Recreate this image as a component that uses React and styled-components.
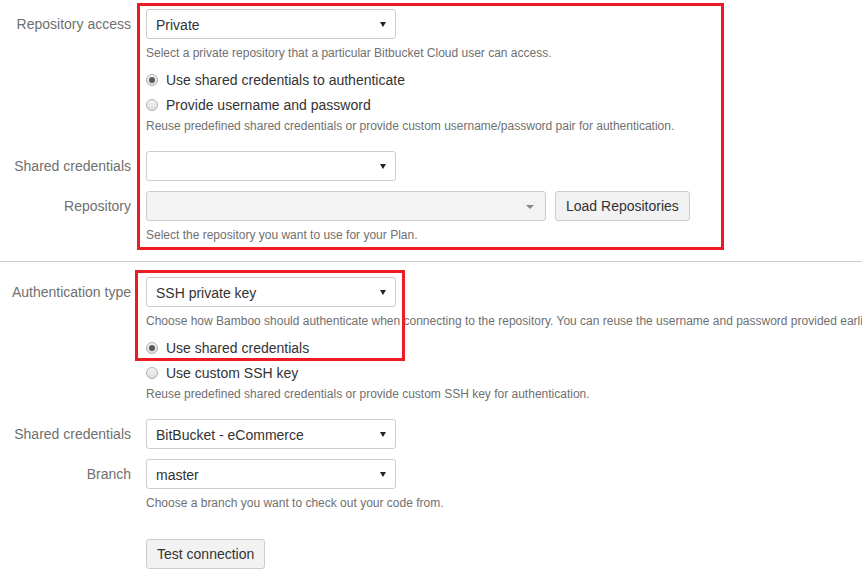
import React from "react";
import styled, { createGlobalStyle } from "styled-components";

const Global = createGlobalStyle`
  html, body { margin: 0; padding: 0; background: #fff; overflow: hidden; }
  body { font-family: Arial, "Liberation Sans", Helvetica, sans-serif; color: #333; }
`;

const Page = styled.div`
  position: relative;
  width: 862px;
  height: 582px;
  overflow: hidden;
`;

const Section = styled.div`
  display: flex;
  flex-direction: column;
  padding-top: ${(p) => p.$pt}px;
`;

const Separator = styled.hr`
  margin: 17px 0 0;
  border: 0;
  border-top: 1px solid #cccccc;
  height: 0;
`;

const Row = styled.div`
  display: grid;
  grid-template-columns: 131px 1fr;
  column-gap: 15px;
  align-items: start;
  margin-top: ${(p) => p.$mt || 0}px;
`;

const Label = styled.label`
  font-size: 14px;
  line-height: 30px;
  color: #707070;
  text-align: right;
  white-space: nowrap;
`;

const Field = styled.div`
  display: flex;
  flex-direction: column;
  min-width: 0;
`;

const Inline = styled.div`
  display: flex;
  align-items: center;
  gap: 9px;
`;

const Select = styled.div`
  position: relative;
  box-sizing: border-box;
  width: ${(p) => p.$w || 250}px;
  height: 30px;
  border: 1px solid #cccccc;
  border-radius: 3px;
  background: ${(p) => (p.$disabled ? "#f3f3f3" : "#fff")};
  font-size: 14px;
  line-height: 30px;
  color: #333;
  padding-left: 9px;
`;

const Arrow = styled.span`
  position: absolute;
  top: 50%;
  right: ${(p) => (p.$caret ? 11 : 9)}px;
  margin-top: ${(p) => (p.$caret ? -1 : -2)}px;
  width: 0;
  height: 0;
  border-left: ${(p) => (p.$caret ? 4 : 3)}px solid transparent;
  border-right: ${(p) => (p.$caret ? 4 : 3)}px solid transparent;
  border-top: ${(p) => (p.$caret ? 4 : 5)}px solid ${(p) => (p.$caret ? "#888" : "#222")};
`;

const Button = styled.button`
  box-sizing: border-box;
  height: 30px;
  padding: 0 10px;
  border: 1px solid #cccccc;
  border-radius: 3px;
  background: #f2f2f2;
  font-family: inherit;
  font-size: 14px;
  color: #333;
  cursor: pointer;
`;

const Desc = styled.div`
  margin-top: ${(p) => (p.$flush ? 0 : 5)}px;
  font-size: 12px;
  line-height: 18px;
  color: #707070;
  white-space: nowrap;
`;

const Radios = styled.div`
  display: flex;
  flex-direction: column;
  margin-top: 5px;
`;

const RadioRow = styled.div`
  display: flex;
  align-items: center;
  height: 25px;
  gap: 8px;
  font-size: 14px;
  color: #333;
`;

const RadioDot = styled.span`
  position: relative;
  box-sizing: border-box;
  width: 12px;
  height: 12px;
  border-radius: 50%;
  border: 1px solid #b0b0b0;
  background: linear-gradient(#f6f6f6, #dcdcdc);
  flex: none;
  margin-top: 1px;
  &::after {
    content: "";
    display: ${(p) => (p.$checked ? "block" : "none")};
    position: absolute;
    left: 2px;
    top: 2px;
    width: 6px;
    height: 6px;
    border-radius: 50%;
    background: #5a5a5a;
  }
`;

const Highlight = styled.div`
  position: absolute;
  box-sizing: border-box;
  border: 3px solid #ed1c24;
  pointer-events: none;
`;

const Radio = ({ checked, children }) => (
  <RadioRow>
    <RadioDot $checked={checked} />
    <span>{children}</span>
  </RadioRow>
);

export default function App() {
  return (
    <Page>
      <Global />
      <Section $pt={9}>
        <Row>
          <Label>Repository access</Label>
          <Field>
            <Select>
              Private
              <Arrow />
            </Select>
            <Desc>Select a private repository that a particular Bitbucket Cloud user can access.</Desc>
            <Radios>
              <Radio checked>Use shared credentials to authenticate</Radio>
              <Radio>Provide username and password</Radio>
            </Radios>
            <Desc $flush>
              Reuse predefined shared credentials or provide custom username/password pair for authentication.
            </Desc>
          </Field>
        </Row>
        <Row $mt={16}>
          <Label>Shared credentials</Label>
          <Field>
            <Select>
              <Arrow />
            </Select>
          </Field>
        </Row>
        <Row $mt={10}>
          <Label>Repository</Label>
          <Field>
            <Inline>
              <Select $w={400} $disabled>
                <Arrow $caret />
              </Select>
              <Button>Load Repositories</Button>
            </Inline>
            <Desc>Select the repository you want to use for your Plan.</Desc>
          </Field>
        </Row>
      </Section>
      <Separator />
      <Section $pt={15}>
        <Row>
          <Label>Authentication type</Label>
          <Field>
            <Select>
              SSH private key
              <Arrow />
            </Select>
            <Desc>
              Choose how Bamboo should authenticate when connecting to the repository. You can reuse the username and
              password provided earlier.
            </Desc>
            <Radios>
              <Radio checked>Use shared credentials</Radio>
              <Radio>Use custom SSH key</Radio>
            </Radios>
            <Desc $flush>Reuse predefined shared credentials or provide custom SSH key for authentication.</Desc>
          </Field>
        </Row>
        <Row $mt={16}>
          <Label>Shared credentials</Label>
          <Field>
            <Select>
              BitBucket - eCommerce
              <Arrow />
            </Select>
          </Field>
        </Row>
        <Row $mt={10}>
          <Label>Branch</Label>
          <Field>
            <Select>
              master
              <Arrow />
            </Select>
            <Desc>Choose a branch you want to check out your code from.</Desc>
          </Field>
        </Row>
        <Row $mt={27}>
          <span />
          <Field>
            <Inline>
              <Button>Test connection</Button>
            </Inline>
          </Field>
        </Row>
      </Section>
      <Highlight style={{ left: 137, top: 3, width: 587, height: 247 }} />
      <Highlight style={{ left: 135, top: 270, width: 270, height: 91 }} />
    </Page>
  );
}
